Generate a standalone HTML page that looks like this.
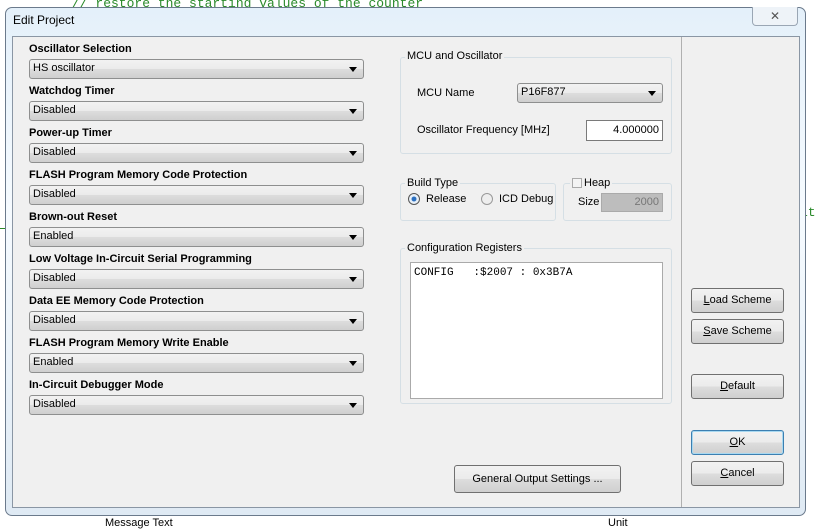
<!DOCTYPE html>
<html><head><style>
*{box-sizing:border-box;margin:0;padding:0}
body{width:819px;height:528px;position:relative;overflow:hidden;background:#fff;font-family:"Liberation Sans",sans-serif;font-size:11px;color:#000}
.a{position:absolute}
.code{font-family:"Liberation Mono",monospace;color:#2a8a2a;font-size:13px}
.frame{left:5px;top:7px;width:801px;height:509px;border:1px solid #6b7a8c;border-radius:7px;background:linear-gradient(180deg,#e4f0fa 0%,#f6fbff 40%,#dfeaf4 100%)}
.client{left:12px;top:36px;width:788px;height:472px;background:#f0f0f0;border:1px solid #8a96a4}
.lbl{font-weight:bold;font-size:11px}
.cb{height:20px;border:1px solid #8e8f8f;border-radius:3px;background:linear-gradient(#f2f2f2,#ebebeb 50%,#dddddd 51%,#cfcfcf);padding:2px 0 0 3px;font-size:11px}
.cb:after{content:"";position:absolute;right:6px;top:7px;border-left:4px solid transparent;border-right:4px solid transparent;border-top:5px solid #000}
.grp{border:1px solid #d5dfe5;border-radius:3px}
.gl{background:#f0f0f0;padding:0 2px;font-size:11px}
.btn{border:1px solid #707070;border-radius:3px;background:linear-gradient(#f2f2f2,#ebebeb 50%,#dddddd 51%,#cfcfcf);text-align:center;font-size:11px}
</style></head><body>
<div class="a code" style="left:72px;top:-4px">// restore the starting values of the counter</div>
<div class="a" style="left:0;top:228px;width:6px;height:1px;background:#2a8a2a"></div>
<div class="a code" style="left:800px;top:205px">it</div>
<div class="a" style="left:105px;top:517px;font-size:11px">Message Text</div>
<div class="a" style="left:608px;top:517px;font-size:11px">Unit</div>
<div class="a frame"></div>
<div class="a" style="left:13px;top:13px;font-size:12px">Edit Project</div>
<div class="a" style="left:752px;top:7px;width:46px;height:19px;border:1px solid #9aa6b4;border-top:none;border-radius:0 0 4px 4px;background:#eef3f8;text-align:center;color:#555;font-size:12px;line-height:18px">✕</div>
<div class="a client"></div>
<div class="a" style="left:681px;top:37px;width:1px;height:470px;background:#b0b0b0"></div>

<div class="a lbl" style="left:29px;top:43px">Oscillator Selection</div>
<div class="a cb" style="left:29px;top:59px;width:335px">HS oscillator</div>
<div class="a lbl" style="left:29px;top:85px">Watchdog Timer</div>
<div class="a cb" style="left:29px;top:101px;width:335px">Disabled</div>
<div class="a lbl" style="left:29px;top:127px">Power-up Timer</div>
<div class="a cb" style="left:29px;top:143px;width:335px">Disabled</div>
<div class="a lbl" style="left:29px;top:169px">FLASH Program Memory Code Protection</div>
<div class="a cb" style="left:29px;top:185px;width:335px">Disabled</div>
<div class="a lbl" style="left:29px;top:211px">Brown-out Reset</div>
<div class="a cb" style="left:29px;top:227px;width:335px">Enabled</div>
<div class="a lbl" style="left:29px;top:253px">Low Voltage In-Circuit Serial Programming</div>
<div class="a cb" style="left:29px;top:269px;width:335px">Disabled</div>
<div class="a lbl" style="left:29px;top:295px">Data EE Memory Code Protection</div>
<div class="a cb" style="left:29px;top:311px;width:335px">Disabled</div>
<div class="a lbl" style="left:29px;top:337px">FLASH Program Memory Write Enable</div>
<div class="a cb" style="left:29px;top:353px;width:335px">Enabled</div>
<div class="a lbl" style="left:29px;top:379px">In-Circuit Debugger Mode</div>
<div class="a cb" style="left:29px;top:395px;width:335px">Disabled</div>

<div class="a grp" style="left:400px;top:57px;width:272px;height:97px"></div>
<div class="a gl" style="left:405px;top:50px">MCU and Oscillator</div>
<div class="a" style="left:417px;top:87px">MCU Name</div>
<div class="a cb" style="left:517px;top:83px;width:146px">P16F877</div>
<div class="a" style="left:417px;top:124px">Oscillator Frequency [MHz]</div>
<div class="a" style="left:586px;top:120px;width:77px;height:21px;border:1px solid #7a7a7a;background:#fff;text-align:right;padding:3px 3px 0 0">4.000000</div>

<div class="a grp" style="left:400px;top:183px;width:156px;height:38px"></div>
<div class="a gl" style="left:405px;top:177px">Build Type</div>
<div class="a" style="left:408px;top:193px;width:12px;height:12px;border-radius:50%;border:1px solid #555;background:radial-gradient(#2a6fc0 30%,#e8f0f8 40%)"></div>
<div class="a" style="left:426px;top:193px">Release</div>
<div class="a" style="left:481px;top:193px;width:12px;height:12px;border-radius:50%;border:1px solid #999;background:#eee"></div>
<div class="a" style="left:499px;top:193px">ICD Debug</div>
<div class="a grp" style="left:563px;top:183px;width:109px;height:38px"></div>
<div class="a gl" style="left:570px;top:177px;padding-left:14px">Heap</div>
<div class="a" style="left:572px;top:178px;width:10px;height:10px;border:1px solid #aaa;background:#f4f4f4"></div>
<div class="a" style="left:578px;top:196px">Size</div>
<div class="a" style="left:601px;top:193px;width:62px;height:19px;border:1px solid #aaa;background:#bdbdbd;color:#777;text-align:right;padding:2px 3px 0 0">2000</div>

<div class="a grp" style="left:400px;top:248px;width:272px;height:156px"></div>
<div class="a gl" style="left:405px;top:242px">Configuration Registers</div>
<div class="a" style="left:410px;top:262px;width:253px;height:137px;border:1px solid #aaa;background:#fff;font-family:'Liberation Mono',monospace;font-size:11px;padding:4px 3px">CONFIG &nbsp;&nbsp;:$2007 : 0x3B7A</div>

<div class="a btn" style="left:691px;top:288px;width:93px;height:25px;line-height:23px"><u>L</u>oad Scheme</div>
<div class="a btn" style="left:691px;top:319px;width:93px;height:25px;line-height:23px"><u>S</u>ave Scheme</div>
<div class="a btn" style="left:691px;top:374px;width:93px;height:25px;line-height:23px"><u>D</u>efault</div>
<div class="a btn" style="left:691px;top:430px;width:93px;height:25px;line-height:23px;border-color:#3c7fb1;box-shadow:inset 0 0 0 1px #a8d8f0"><u>O</u>K</div>
<div class="a btn" style="left:691px;top:461px;width:93px;height:25px;line-height:23px"><u>C</u>ancel</div>
<div class="a btn" style="left:454px;top:465px;width:167px;height:28px;line-height:26px">General Output Settings ...</div>
</body></html>
